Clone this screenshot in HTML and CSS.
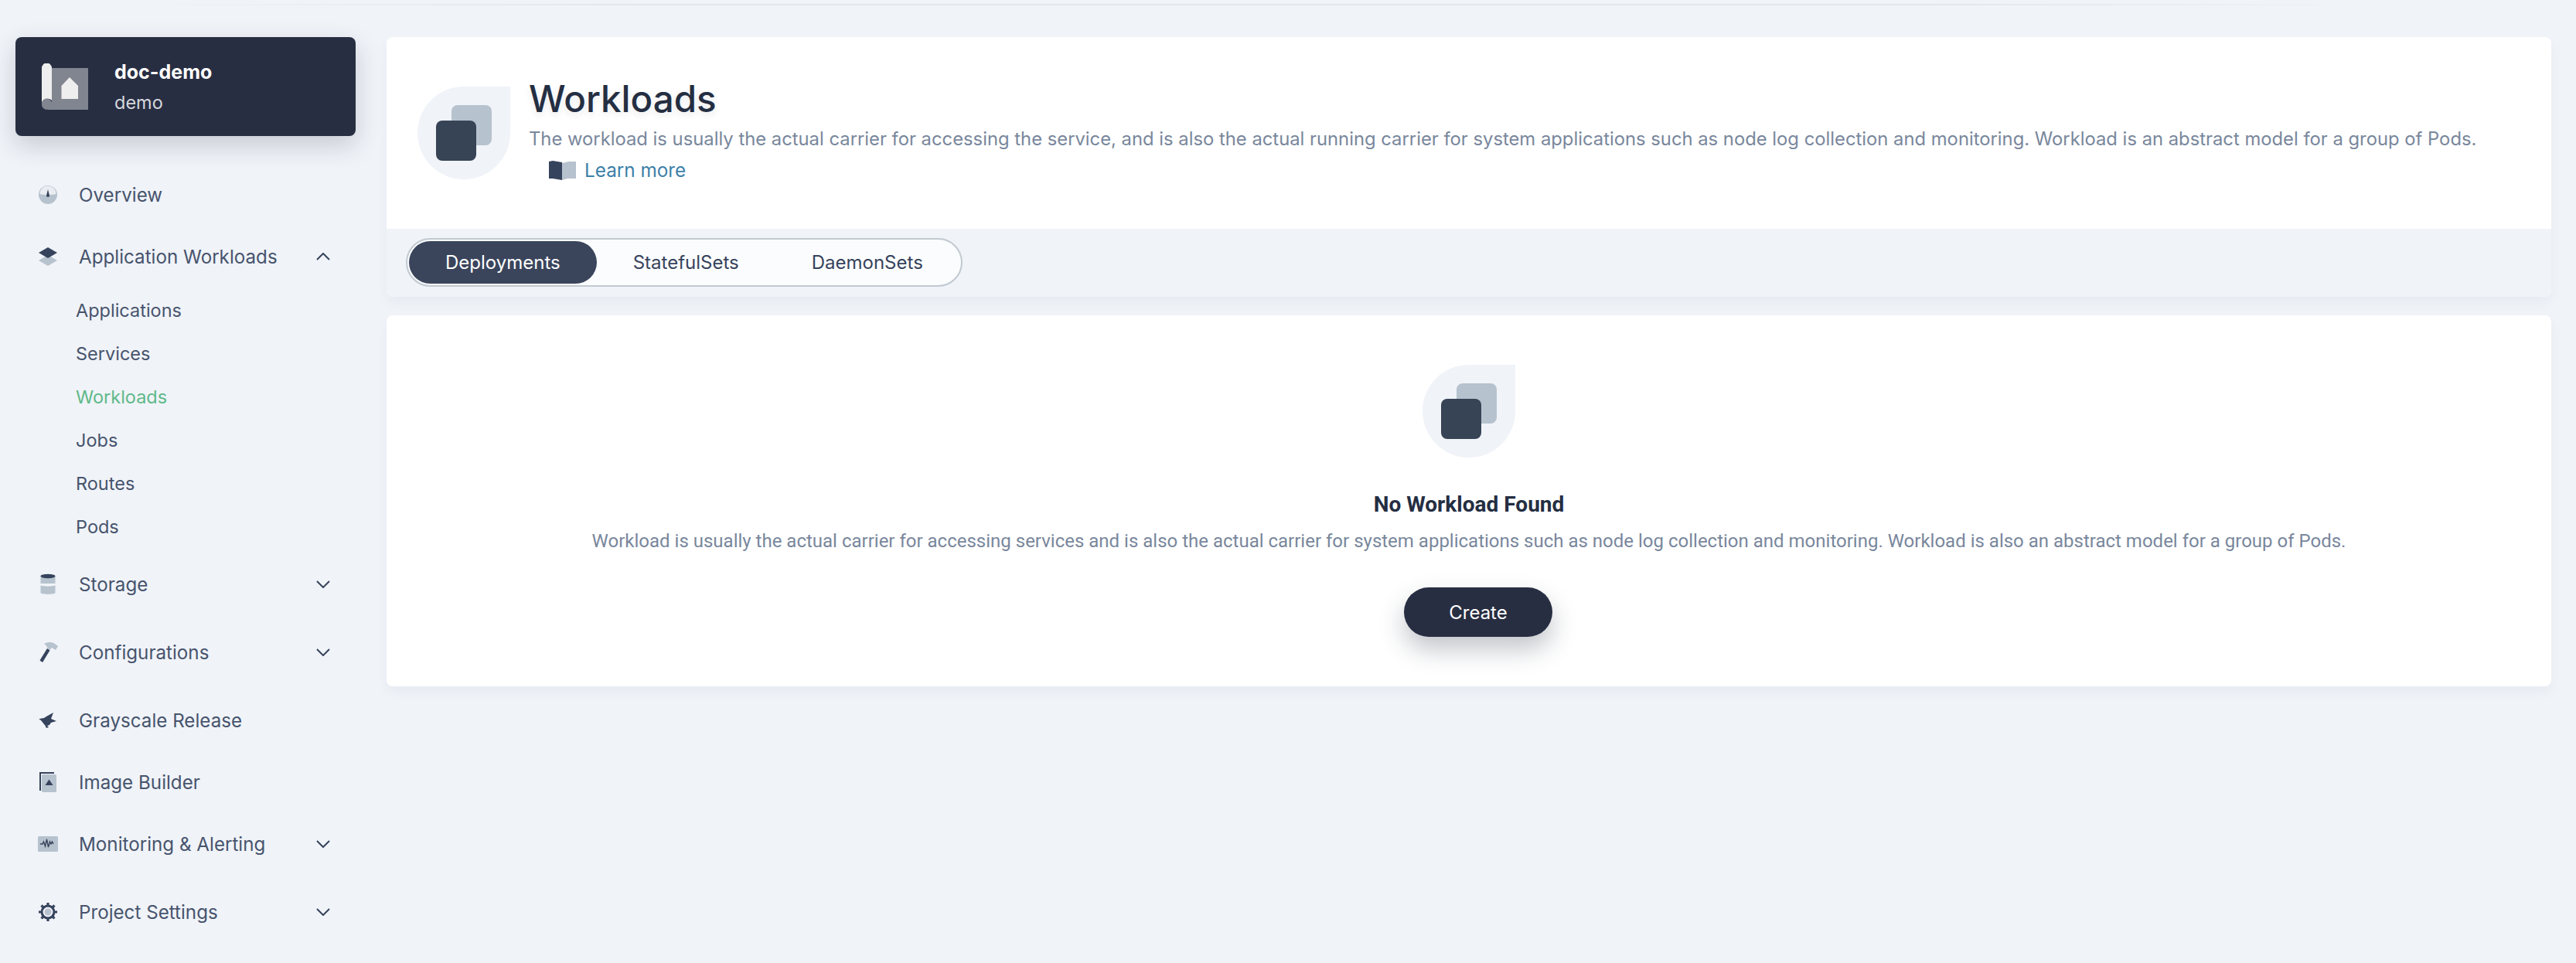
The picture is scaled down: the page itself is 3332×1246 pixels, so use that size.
FILE: index.html
```html
<!DOCTYPE html>
<html lang="en">
<head>
    <meta charset="UTF-8">
    <title>Workloads</title>
    <link rel="stylesheet" href="styles.css">
</head>
<body>
    <div class="top-line"></div>
    <div class="layout">
        <aside class="sidebar">
            <div class="project">
                <svg class="project-icon" viewBox="0 0 60 60" width="60" height="60">
                    <path d="M13 6H60V60H8V50H13Z" fill="#80858f"/>
                    <path d="M0 6a6.500 6.500 0 0 1 13 0V48a7 7 0 0 0-7-2a7 7 0 0 0-6 6Z" fill="#eee"/>
                    <path d="M0 52a6.500 6.500 0 0 1 13 0a8 8 0 0 1-6.500 8A7 7 0 0 1 0 52Z" fill="#80858f"/>
                    <path d="M25.500 46V29L36 18l11 11v17Z" fill="#eee"/>
                </svg>
                <div>
                    <div class="project-name">doc-demo</div>
                    <div class="project-sub">demo</div>
                </div>
            </div>
            <nav class="nav">
                <div class="nav-item">
                    <svg class="nav-icon" viewBox="0 0 28 28"><circle cx="14" cy="14" r="12" fill="#b6c2cd"/><path d="M3.500 13a10.500 10.500 0 0 1 21 0c-4 1.500-17 1.500-21 0Z" fill="#e9edf1"/><path d="M14 7l2 8a2 2 0 1 1-4 0Z" fill="#36435c"/></svg>
                    <span class="nav-text">Overview</span>
                </div>
                <div class="nav-item nav-open">
                    <svg class="nav-icon" viewBox="0 0 28 28"><path d="M14 12l12 7-12 7-12-7Z" fill="#b6c2cd"/><path d="M14 2l12 7-12 7-12-7Z" fill="#36435c"/></svg>
                    <span class="nav-text">Application Workloads</span>
                    <svg class="chevron" viewBox="0 0 18 10"><path d="M1 9l8-8 8 8" fill="none" stroke="#36435c" stroke-width="2"/></svg>
                </div>
                <div class="sub-nav">
                    <div class="sub-item">Applications</div>
                    <div class="sub-item">Services</div>
                    <div class="sub-item active">Workloads</div>
                    <div class="sub-item">Jobs</div>
                    <div class="sub-item">Routes</div>
                    <div class="sub-item">Pods</div>
                </div>
                <div class="nav-item has-sub">
                    <svg class="nav-icon" viewBox="0 0 28 28"><path d="M4.500 3h19v10h-19Z" fill="#b6c2cd"/><path d="M4.500 15.500c5 1.500 14 1.500 19 0V25c-2 2.500-17 2.500-19 0Z" fill="#b6c2cd"/><ellipse cx="14" cy="3.500" rx="9.500" ry="2.700" fill="#36435c"/></svg>
                    <span class="nav-text">Storage</span>
                    <svg class="chevron" viewBox="0 0 18 10"><path d="M1 1l8 8 8-8" fill="none" stroke="#36435c" stroke-width="2"/></svg>
                </div>
                <div class="nav-item has-sub">
                    <svg class="nav-icon" viewBox="0 0 28 28"><path d="M9 3c6-3 11-2 14 0l4 3-3 5-5-3-3 3-3-3c0-2-2-4-4-5Z" fill="#b6c2cd"/><path d="M13 9l3.500 2.500L7 27l-3.500-2.500Z" fill="#36435c"/></svg>
                    <span class="nav-text">Configurations</span>
                    <svg class="chevron" viewBox="0 0 18 10"><path d="M1 1l8 8 8-8" fill="none" stroke="#36435c" stroke-width="2"/></svg>
                </div>
                <div class="nav-item">
                    <svg class="nav-icon" viewBox="0 0 28 28"><path d="M3 12l6-1 3-2 9-5-3 8 7 3-7 2-2 3-3 1 2 2-3 1-2-4c-3-3-4-6-8-8Z" fill="#36435c"/></svg>
                    <span class="nav-text">Grayscale Release</span>
                </div>
                <div class="nav-item">
                    <svg class="nav-icon" viewBox="0 0 28 28"><path d="M3 1h19v2H5v22H3Z" fill="#36435c"/><rect x="6" y="4" width="19" height="23" rx="1.500" fill="#b6c2cd"/><path d="M15.500 10.500l5 7.500h-10Z" fill="#36435c"/></svg>
                    <span class="nav-text">Image Builder</span>
                </div>
                <div class="nav-item has-sub">
                    <svg class="nav-icon" viewBox="0 0 28 28"><rect x="1" y="4" width="26" height="20" rx="1.500" fill="#b6c2cd"/><path d="M4 14h3l1.500-3 2 6 2-9 2 10 2-7 1.500 3 1.500-3 1.500 3" fill="none" stroke="#36435c" stroke-width="1.400"/></svg>
                    <span class="nav-text">Monitoring &amp; Alerting</span>
                    <svg class="chevron" viewBox="0 0 18 10"><path d="M1 1l8 8 8-8" fill="none" stroke="#36435c" stroke-width="2"/></svg>
                </div>
                <div class="nav-item has-sub">
                    <svg class="nav-icon" viewBox="0 0 28 28"><circle cx="14" cy="14" r="4.500" fill="#b6c2cd"/><circle cx="14" cy="14" r="8" fill="none" stroke="#36435c" stroke-width="3"/><path d="M14 2v24M2 14h24M5.500 5.500l17 17M22.500 5.500l-17 17" stroke="#36435c" stroke-width="3.200" stroke-dasharray="3.500 17"/></svg>
                    <span class="nav-text">Project Settings</span>
                    <svg class="chevron" viewBox="0 0 18 10"><path d="M1 1l8 8 8-8" fill="none" stroke="#36435c" stroke-width="2"/></svg>
                </div>
            </nav>
        </aside>
        <main class="main">
            <section class="card header-card">
                <div class="page-head">
                    <div class="drop">
                        <div class="sq sq-back"></div>
                        <div class="sq sq-front"></div>
                    </div>
                    <div class="head-text">
                        <h1 class="page-title">Workloads</h1>
                        <p class="page-desc">The workload is usually the actual carrier for accessing the service, and is also the actual running carrier for system applications such as node log collection and monitoring. Workload is an abstract model for a group of Pods. <span class="learn-more"><svg class="book" viewBox="0 0 35 25"><path d="M0 1l5-1 12 2v23l-12-2H0Z" fill="#36435c"/><path d="M17 3l9-2 9 0v22H24l-7 2Z" fill="#b6c2cd"/></svg><a class="learn-link">Learn more</a></span></p>
                    </div>
                </div>
                <div class="tab-band">
                    <div class="tabs">
                        <div class="tab active">Deployments</div>
                        <div class="tab">StatefulSets</div>
                        <div class="tab">DaemonSets</div>
                    </div>
                </div>
            </section>
            <section class="card empty-card">
                <div class="drop">
                    <div class="sq sq-back"></div>
                    <div class="sq sq-front"></div>
                </div>
                <h2 class="empty-title">No Workload Found</h2>
                <p class="empty-desc">Workload is usually the actual carrier for accessing services and is also the actual carrier for system applications such as node log collection and monitoring. Workload is also an abstract model for a group of Pods.</p>
                <button class="btn-create">Create</button>
            </section>
        </main>
    </div>
</body>
</html>
```

FILE: styles.css
```css
*{
    margin: 0;
    padding: 0;
    box-sizing: border-box;
}
body{
    background: #f0f3f8;
    font-family: Inter, "Noto Sans", sans-serif;
    color: #242e42;
    height: 1246px;
    overflow: hidden;
}
.top-line{
    height: 2px;
    margin-top: 5px;
    background: linear-gradient(90deg, transparent 5%, #e3e7ed 25%, #e3e7ed 75%, transparent 92%);
}
.layout{
    display: flex;
    padding-top: 41px;
}

/* sidebar */
.sidebar{
    width: 500px;
    flex: none;
    padding-left: 20px;
}
.project{
    width: 440px;
    height: 128px;
    background: #282e42;
    border-radius: 8px;
    box-shadow: 0 12px 32px rgba(36,46,66,0.2);
    display: flex;
    align-items: center;
    padding-left: 34px;
    gap: 34px;
}
.project-name{
    color: #fff;
    font-weight: 700;
    font-size: 25px;
    line-height: 40px;
}
.project-sub{
    color: #d5d8de;
    font-size: 23.500px;
    line-height: 36px;
    margin-top: 2px;
}
.nav{
    margin-top: 56px;
    width: 440px;
}
.nav-item{
    height: 40px;
    display: flex;
    align-items: center;
    padding-left: 28px;
    margin-bottom: 40px;
}
.has-sub{
    margin-bottom: 48px;
}
.nav-open{
    margin-bottom: 22px;
}
.nav-icon{
    width: 28px;
    height: 28px;
    flex: none;
}
.nav-text{
    margin-left: 26px;
    font-size: 24.200px;
    color: #47546d;
    flex: 1;
}
.chevron{
    width: 18px;
    height: 10px;
    flex: none;
    margin-right: 33px;
}
.sub-nav{
    padding-left: 78px;
    margin-bottom: 26px;
}
.sub-item{
    height: 56px;
    line-height: 56px;
    font-size: 23.500px;
    color: #47546d;
}
.sub-item.active{
    color: #5fb98a;
}

/* main */
.main{
    width: 2800px;
    flex: none;
}
.card{
    background: #fff;
    border-radius: 8px;
    box-shadow: 0 8px 16px rgba(36,46,66,0.04);
}
.header-card{
    height: 336px;
    overflow: hidden;
}
.page-head{
    height: 248px;
    display: flex;
    padding: 64px 40px 0 40px;
    gap: 24px;
}
.drop{
    width: 120px;
    height: 120px;
    flex: none;
    background: #f0f3f8;
    border-radius: 50% 0 50% 50%;
    position: relative;
}
.sq{
    position: absolute;
    width: 52px;
    height: 52px;
    border-radius: 8px;
}
.sq-back{
    left: 44px;
    top: 24px;
    background: #b6c2cd;
}
.sq-front{
    left: 24px;
    top: 44px;
    background: #374456;
}
.page-title{
    font-size: 47.500px;
    font-weight: 500;
    line-height: 60px;
    margin-top: -14px;
    color: #242e42;
    text-shadow: 0 4px 8px rgba(36,46,66,0.1);
}
.page-desc{
    font-size: 23.800px;
    line-height: 40px;
    color: #79879c;
    margin-top: 2px;
}
.learn-more{
    display: inline-flex;
    align-items: center;
    margin-left: 26px;
    vertical-align: top;
}
.book{
    width: 35px;
    height: 25px;
    margin-right: 11px;
}
.learn-link{
    font-size: 24.300px;
    color: #3d7fa8;
}
.tab-band{
    height: 88px;
    background: #f0f3f8;
    padding: 12px 0 0 25px;
}
.tabs{
    display: inline-flex;
    height: 63px;
    padding: 2px;
    border: 2px solid #c1c9d1;
    border-radius: 32px;
    background: #fbfcfd;
}
.tab{
    padding: 0 47px;
    line-height: 55px;
    font-size: 24px;
    color: #36435c;
    border-radius: 28px;
}
.tab.active{
    background: #3a455c;
    color: #fff;
}
.empty-card{
    margin-top: 24px;
    height: 480px;
    display: flex;
    flex-direction: column;
    align-items: center;
    padding-top: 64px;
}
.empty-title{
    font-family: Roboto, sans-serif;
    font-size: 28px;
    font-weight: 700;
    line-height: 40px;
    margin-top: 41px;
    color: #242e42;
}
.empty-desc{
    font-family: Roboto, sans-serif;
    font-size: 24px;
    line-height: 40px;
    margin-top: 7px;
    color: #79879c;
}
.btn-create{
    margin-top: 40px;
    margin-left: 24px;
    width: 192px;
    height: 64px;
    border: none;
    border-radius: 32px;
    background: #282e42;
    color: #fff;
    font-family: Inter, sans-serif;
    font-size: 24px;
    box-shadow: 0 16px 32px rgba(36,46,66,0.28);
}
```
